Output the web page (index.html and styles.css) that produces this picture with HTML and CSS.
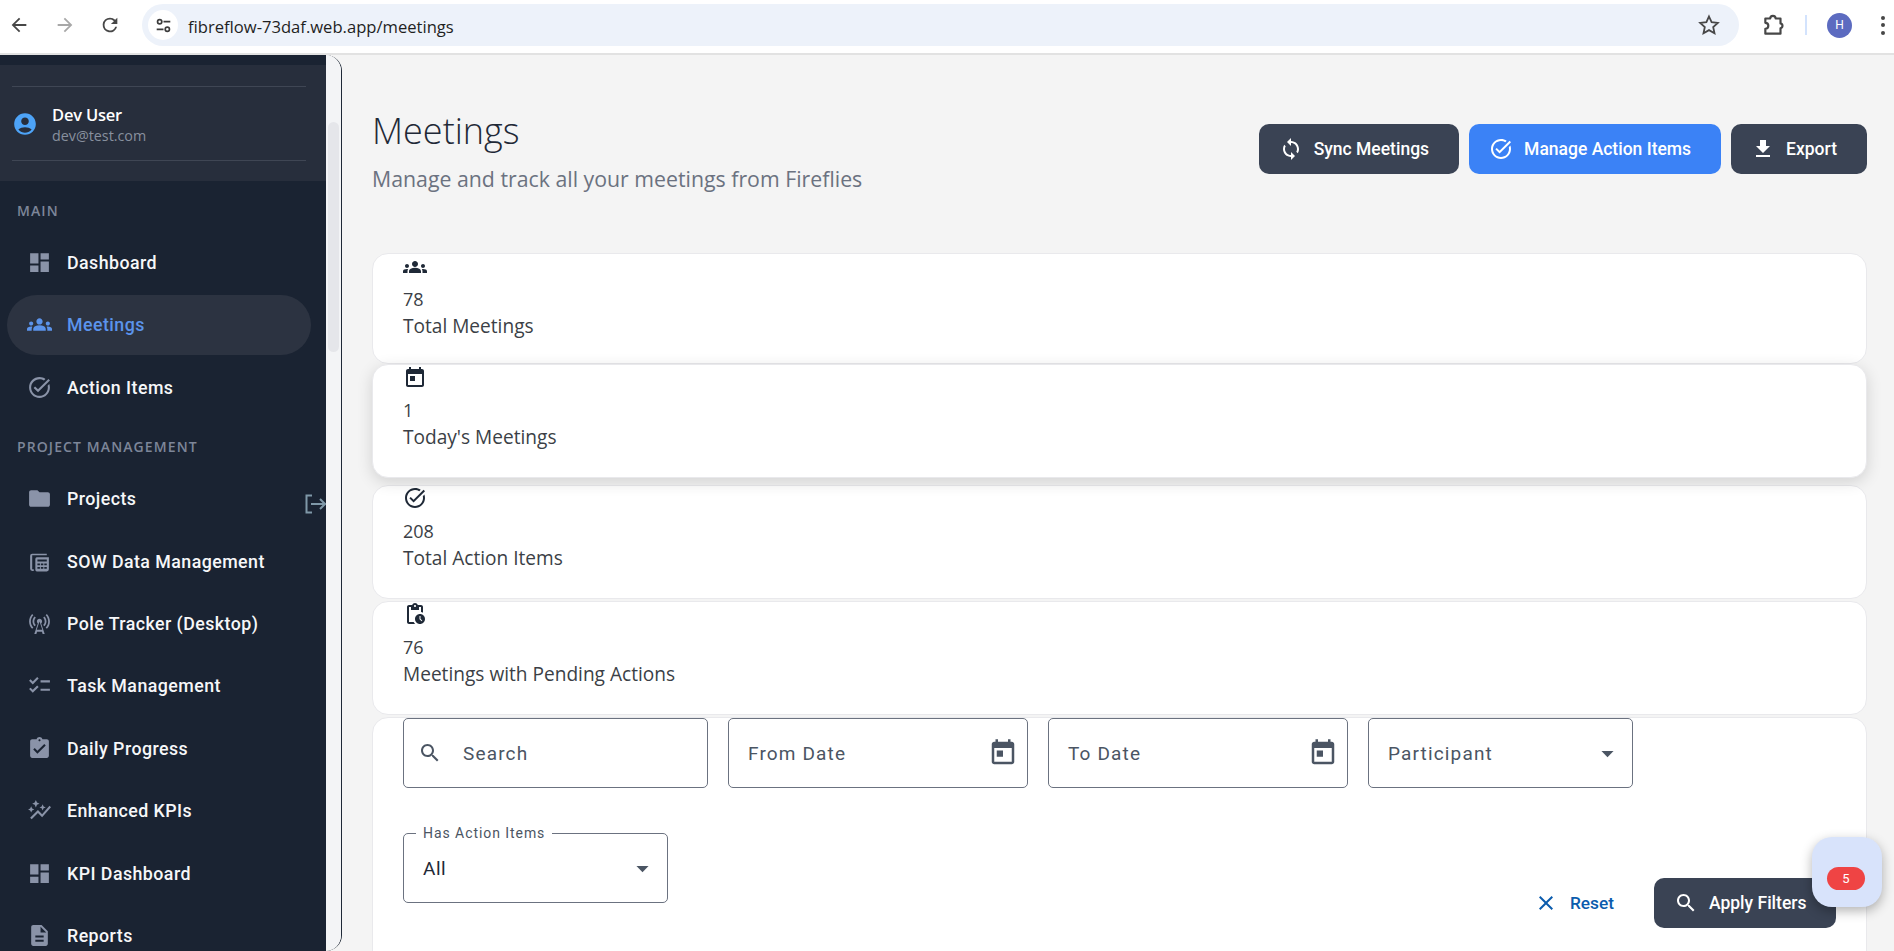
FILE: index.html
```html
<!DOCTYPE html>
<html lang="en">
<head>
<meta charset="utf-8">
<title>Meetings</title>
<link rel="stylesheet" href="styles.css">
</head>
<body>
<svg class="sprite" aria-hidden="true">
  <symbol id="i-dashboard" viewBox="0 0 24 24"><path d="M3 13h8V3H3v10zm0 8h8v-6H3v6zm10 0h8V11h-8v10zm0-18v6h8V3h-8z"/></symbol>
  <symbol id="i-groups" viewBox="0 0 24 24"><path d="M12 12.75c1.63 0 3.07.39 4.24.9 1.08.48 1.76 1.56 1.76 2.73V18H6v-1.61c0-1.18.68-2.26 1.76-2.73 1.17-.52 2.61-.91 4.24-.91zM4 13c1.1 0 2-.9 2-2s-.9-2-2-2-2 .9-2 2 .9 2 2 2zm1.13 1.1c-.37-.06-.74-.1-1.13-.1-.99 0-1.93.21-2.78.58C.48 14.9 0 15.62 0 16.43V18h4.5v-1.61c0-.83.23-1.61.63-2.29zM20 13c1.1 0 2-.9 2-2s-.9-2-2-2-2 .9-2 2 .9 2 2 2zm4 3.43c0-.81-.48-1.53-1.22-1.85-.85-.37-1.79-.58-2.78-.58-.39 0-.76.04-1.13.1.4.68.63 1.46.63 2.29V18H24v-1.57zM12 6c1.66 0 3 1.34 3 3s-1.34 3-3 3-3-1.34-3-3 1.34-3 3-3z"/></symbol>
  <symbol id="i-taskalt" viewBox="0 0 24 24"><path d="M22 5.18 10.59 16.6l-4.24-4.24 1.41-1.41 2.83 2.83 10-10L22 5.18zm-2.21 5.04c.13.57.21 1.17.21 1.78 0 4.42-3.58 8-8 8s-8-3.58-8-8 3.58-8 8-8c1.58 0 3.04.46 4.28 1.25l1.44-1.44C16.1 2.67 14.13 2 12 2 6.48 2 2 6.48 2 12s4.48 10 10 10 10-4.48 10-10c0-1.19-.22-2.33-.6-3.39l-1.61 1.61z"/></symbol>
  <symbol id="i-folder" viewBox="0 0 24 24"><path d="M10 4H4c-1.1 0-1.99.9-1.99 2L2 18c0 1.1.9 2 2 2h16c1.1 0 2-.9 2-2V8c0-1.1-.9-2-2-2h-8l-2-2z"/></symbol>
  <symbol id="i-sow" viewBox="0 0 24 24"><path d="M3 6.500a2 2 0 0 1 2-2h14v1.600H5v13.400h1.500V21H5a2 2 0 0 1-2-2z"/><path fill-rule="evenodd" d="M9.500 8H21v11.500a2 2 0 0 1-2 2H9.500A1.500 1.500 0 0 1 8 20V9.500A1.500 1.500 0 0 1 9.500 8zM10 10v2h9v-2zm0 3.800v1.700h2.400v-1.700zm3.300 0v1.700h2.400v-1.700zm3.300 0v1.700H19v-1.700zM10 17.300V19h2.400v-1.700zm3.300 0V19h2.400v-1.700zm3.300 0V19H19v-1.700z"/></symbol>
  <symbol id="i-tower" viewBox="0 0 24 24"><path d="M7.300 14.700l1.200-1.200c-1-1-1.500-2.300-1.500-3.500 0-1.300.5-2.600 1.500-3.500L7.300 5.300c-1.300 1.300-2 3-2 4.700s.7 3.400 2 4.700zM19.100 2.900l-1.200 1.200c1.600 1.600 2.400 3.800 2.400 5.900 0 2.100-.8 4.300-2.400 5.900l1.200 1.200c2-2 2.900-4.500 2.900-7.100 0-2.600-1-5.100-2.900-7.100zM6.100 4.100 4.900 2.900C3 4.900 2 7.400 2 10c0 2.600 1 5.100 2.900 7.100l1.200-1.200c-1.600-1.600-2.400-3.800-2.400-5.900 0-2.100.8-4.300 2.400-5.900zm10.600 10.600c1.300-1.300 2-3 2-4.700-.1-1.700-.7-3.400-2-4.700l-1.200 1.200c1 1 1.500 2.300 1.500 3.500 0 1.300-.5 2.600-1.500 3.500l1.200 1.200zM14.500 10c0-1.380-1.120-2.500-2.500-2.500S9.500 8.620 9.500 10c0 .76.34 1.420.87 1.880L7 22h2l.67-2h4.670l.66 2h2l-3.370-10.120c.53-.46.87-1.120.87-1.880zm-5.170 8L12 10l2.670 8H9.330z"/></symbol>
  <symbol id="i-checklist" viewBox="0 0 24 24"><path d="M22 7h-9v2h9V7zm0 8h-9v2h9v-2zM5.540 11 2 7.460l1.410-1.410 2.120 2.120 4.240-4.240 1.410 1.410L5.540 11zm0 8L2 15.460l1.410-1.410 2.120 2.120 4.240-4.240 1.410 1.410L5.540 19z"/></symbol>
  <symbol id="i-assign" viewBox="0 0 24 24"><path d="M19 3h-4.180C14.400 1.840 13.300 1 12 1c-1.300 0-2.400.84-2.820 2H5c-1.100 0-2 .9-2 2v14c0 1.100.9 2 2 2h14c1.100 0 2-.9 2-2V5c0-1.100-.9-2-2-2zm-7 0c.55 0 1 .45 1 1s-.45 1-1 1-1-.45-1-1 .45-1 1-1zm-2 14-4-4 1.410-1.410L10 14.170l6.590-6.590L18 9l-8 8z"/></symbol>
  <symbol id="i-graph" viewBox="0 0 24 24"><path d="M14.060 9.940 12 9l2.060-.94L15 6l.94 2.060L18 9l-2.060.94L15 12zM4 14l.94-2.060L7 11l-2.060-.94L4 8l-.94 2.060L1 11l2.060.94zm4.500-5 1.090-2.410L12 5.500l-2.410-1.090L8.500 2 7.410 4.410 5 5.500l2.410 1.090zm-4 11.500 6-6.010 4 4L23 8.930l-1.410-1.410-7.090 7.970-4-4L3 19z"/></symbol>
  <symbol id="i-desc" viewBox="0 0 24 24"><path d="M14 2H6c-1.100 0-1.990.9-1.990 2L4 20c0 1.100.89 2 1.990 2H18c1.100 0 2-.9 2-2V8l-6-6zm2 16H8v-2h8v2zm0-4H8v-2h8v2zm-3-5V3.500L18.500 9H13z"/></symbol>
  <symbol id="i-account" viewBox="0 0 24 24"><path d="M12 2C6.480 2 2 6.480 2 12s4.480 10 10 10 10-4.480 10-10S17.520 2 12 2zm0 4c1.930 0 3.500 1.570 3.500 3.500S13.930 13 12 13s-3.500-1.570-3.500-3.500S10.070 6 12 6zm0 14c-2.030 0-4.430-.82-6.140-2.880C7.550 15.800 9.680 15 12 15s4.450.8 6.140 2.120C16.430 19.180 14.030 20 12 20z"/></symbol>
  <symbol id="i-today" viewBox="0 0 24 24"><path d="M19 3h-1V1h-2v2H8V1H6v2H5c-1.110 0-1.990.9-1.990 2L3 19c0 1.100.89 2 2 2h14c1.100 0 2-.9 2-2V5c0-1.100-.9-2-2-2zm0 16H5V8h14v11zM7 10h5v5H7z"/></symbol>
  <symbol id="i-pending" viewBox="0 0 24 24"><path d="M17 12c-2.760 0-5 2.240-5 5s2.240 5 5 5 5-2.240 5-5-2.240-5-5-5zm1.650 7.350L16.500 17.200V14h1v2.790l1.850 1.850-.7.71zM18 3h-3.180C14.400 1.840 13.300 1 12 1s-2.400.84-2.820 2H6c-1.100 0-2 .9-2 2v15c0 1.100.9 2 2 2h6.110c-.59-.57-1.070-1.250-1.420-2H6V5h2v3h8V5h2v5.080c.71.1 1.380.31 2 .6V5c0-1.100-.9-2-2-2zm-6 2c-.55 0-1-.45-1-1s.45-1 1-1 1 .45 1 1-.45 1-1 1z"/></symbol>
  <symbol id="i-search" viewBox="0 0 24 24"><path d="M15.500 14h-.79l-.28-.27C15.410 12.590 16 11.110 16 9.500 16 5.910 13.090 3 9.500 3S3 5.910 3 9.500 5.910 16 9.500 16c1.610 0 3.090-.59 4.230-1.570l.27.28v.79l5 4.990L20.490 19l-4.990-5zm-6 0C7.010 14 5 11.990 5 9.500S7.010 5 9.500 5 14 7.010 14 9.500 11.990 14 9.500 14z"/></symbol>
  <symbol id="i-close" viewBox="0 0 24 24"><path d="M19 6.410 17.590 5 12 10.590 6.410 5 5 6.410 10.590 12 5 17.590 6.410 19 12 13.410 17.590 19 19 17.590 13.410 12z"/></symbol>
  <symbol id="i-sync" viewBox="0 0 24 24"><path d="M12 4V1L8 5l4 4V6c3.310 0 6 2.690 6 6 0 1.010-.25 1.970-.7 2.800l1.460 1.460C19.540 15.030 20 13.570 20 12c0-4.420-3.580-8-8-8zm0 14c-3.310 0-6-2.690-6-6 0-1.010.25-1.970.7-2.800L5.240 7.740C4.460 8.970 4 10.430 4 12c0 4.420 3.580 8 8 8v3l4-4-4-4v3z"/></symbol>
  <symbol id="i-download" viewBox="0 0 24 24"><path d="M19 9h-4V3H9v6H5l7 7 7-7zM5 18v2h14v-2H5z"/></symbol>
  <symbol id="i-drop" viewBox="0 0 24 24"><path d="M7 10l5 5 5-5z"/></symbol>
</svg>

<header class="browser">
  <svg class="br-icon br-back" viewBox="0 0 24 24"><path d="M20 11H7.800l5.600-5.600L12 4l-8 8 8 8 1.400-1.400L7.800 13H20z"/></svg>
  <svg class="br-icon br-fwd" viewBox="0 0 24 24"><path d="M4 11h12.200l-5.600-5.600L12 4l8 8-8 8-1.400-1.400 5.600-5.600H4z"/></svg>
  <svg class="br-icon br-reload" viewBox="0 0 24 24"><path d="M17.650 6.350A7.960 7.960 0 0 0 12 4a8 8 0 1 0 7.730 10h-2.080A6 6 0 1 1 12 6c1.660 0 3.140.69 4.220 1.780L13 11h7V4z"/></svg>
  <div class="omnibox">
    <span class="chip">
      <svg class="chip-icon" viewBox="0 0 20 20"><circle cx="5.500" cy="5.500" r="2.500"/><circle cx="14.500" cy="14.500" r="2.500"/><path class="chip-line" d="M10 5.500h8M2 14.500h8"/></svg>
    </span>
    <span class="url">fibreflow-73daf.web.app/meetings</span>
    <svg class="star" viewBox="0 0 24 24"><path d="M12 3.500l2.600 5.700 6.200.7-4.600 4.200 1.300 6.100-5.500-3.100-5.500 3.100 1.300-6.100-4.600-4.200 6.200-.7z"/></svg>
  </div>
  <svg class="puzzle" viewBox="0 0 24 24"><path d="M4 6h4.500a2.500 2.500 0 0 1 5 0H18v4.500a2.300 2.300 0 0 1 0 4.500V20H4v-4.500a2.700 2.700 0 0 0 0-5.500z"/></svg>
  <span class="br-sep"></span>
  <span class="avatar">H</span>
  <span class="kebab"><i></i><i></i><i></i></span>
</header>

<div class="app">
  <aside class="sidebar">
    <div class="side-content">
      <div class="side-top"></div>
      <div class="user-block">
        <div class="user-row">
          <svg class="user-icon"><use href="#i-account"/></svg>
          <div class="user-text">
            <div class="user-name">Dev User</div>
            <div class="user-mail">dev@test.com</div>
          </div>
        </div>
      </div>
      <div class="section-label first">MAIN</div>
      <nav class="nav">
        <a class="nav-item"><svg class="nav-icon"><use href="#i-dashboard"/></svg>Dashboard</a>
        <a class="nav-item active"><svg class="nav-icon"><use href="#i-groups"/></svg>Meetings</a>
        <a class="nav-item"><svg class="nav-icon"><use href="#i-taskalt"/></svg>Action Items</a>
      </nav>
      <div class="section-label second">PROJECT MANAGEMENT</div>
      <nav class="nav">
        <a class="nav-item"><svg class="nav-icon"><use href="#i-folder"/></svg>Projects</a>
        <a class="nav-item"><svg class="nav-icon"><use href="#i-sow"/></svg>SOW Data Management</a>
        <a class="nav-item"><svg class="nav-icon"><use href="#i-tower"/></svg>Pole Tracker (Desktop)</a>
        <a class="nav-item"><svg class="nav-icon"><use href="#i-checklist"/></svg>Task Management</a>
        <a class="nav-item"><svg class="nav-icon"><use href="#i-assign"/></svg>Daily Progress</a>
        <a class="nav-item"><svg class="nav-icon"><use href="#i-graph"/></svg>Enhanced KPIs</a>
        <a class="nav-item"><svg class="nav-icon"><use href="#i-dashboard"/></svg>KPI Dashboard</a>
        <a class="nav-item"><svg class="nav-icon"><use href="#i-desc"/></svg>Reports</a>
      </nav>
      <svg class="logout" viewBox="0 0 24 24"><path d="M10 3.500H4.500v17H10M9 12h14M18 7l5 5-5 5"/></svg>
    </div>
    <div class="side-track"><div class="side-thumb"></div></div>
  </aside>

  <main class="main">
    <section class="page-head">
      <div>
        <h1 class="title">Meetings</h1>
        <p class="subtitle">Manage and track all your meetings from Fireflies</p>
      </div>
      <div class="head-actions">
        <button class="btn btn-dark"><svg class="btn-icon"><use href="#i-sync"/></svg>Sync Meetings</button>
        <button class="btn btn-blue"><svg class="btn-icon"><use href="#i-taskalt"/></svg>Manage Action Items</button>
        <button class="btn btn-dark"><svg class="btn-icon"><use href="#i-download"/></svg>Export</button>
      </div>
    </section>

    <section class="stats">
      <article class="card stat stat-a">
        <svg class="stat-icon"><use href="#i-groups"/></svg>
        <div class="stat-num">78</div>
        <div class="stat-label">Total Meetings</div>
      </article>
      <article class="card stat stat-b raised">
        <svg class="stat-icon"><use href="#i-today"/></svg>
        <div class="stat-num">1</div>
        <div class="stat-label">Today's Meetings</div>
      </article>
      <article class="card stat stat-c">
        <svg class="stat-icon"><use href="#i-taskalt"/></svg>
        <div class="stat-num">208</div>
        <div class="stat-label">Total Action Items</div>
      </article>
      <article class="card stat stat-d">
        <svg class="stat-icon"><use href="#i-pending"/></svg>
        <div class="stat-num">76</div>
        <div class="stat-label">Meetings with Pending Actions</div>
      </article>
    </section>

    <section class="card filters">
      <div class="filter-row">
        <div class="field f-search"><svg class="field-search"><use href="#i-search"/></svg><span>Search</span></div>
        <div class="field f-date"><span>From Date</span><svg class="field-cal"><use href="#i-today"/></svg></div>
        <div class="field f-date"><span>To Date</span><svg class="field-cal"><use href="#i-today"/></svg></div>
        <div class="field f-select"><span>Participant</span><svg class="field-drop"><use href="#i-drop"/></svg></div>
      </div>
      <div class="filter-row second-row">
        <div class="field f-select filled">
          <label class="float-label">Has Action Items</label>
          <span>All</span><svg class="field-drop"><use href="#i-drop"/></svg>
        </div>
        <div class="filter-actions">
          <button class="btn-text"><svg class="btn-icon"><use href="#i-close"/></svg>Reset</button>
          <button class="btn btn-dark apply"><svg class="btn-icon"><use href="#i-search"/></svg>Apply Filters</button>
        </div>
      </div>
    </section>
  </main>
</div>

<div class="float-widget"><span class="badge">5</span></div>
</body>
</html>
```
FILE: styles.css
```css
* { box-sizing: border-box; }
html, body { margin: 0; height: 100%; overflow: hidden; }
body {
  display: flex;
  flex-direction: column;
  height: 951px;
  background: #f4f4f4;
  font-family: "Open Sans", "Liberation Sans", sans-serif;
  color: #374151;
}
.sprite { display: none; }
svg { fill: currentColor; flex: none; }

/* Browser chrome */
.browser {
  height: 55px;
  flex: none;
  display: flex;
  align-items: center;
  background: #fff;
  border-bottom: 2px solid #e2e2e2;
  padding-bottom: 3px;
  position: relative;
}
.br-icon { width: 22px; height: 22px; color: #474747; }
.br-back { margin-left: 8px; }
.br-fwd { margin-left: 23.500px; color: #a8a8a8; }
.br-reload { margin-left: 23px; }
.omnibox {
  margin-left: 21.500px;
  width: 1597px;
  height: 42px;
  border-radius: 21px;
  background: #edf2fa;
  display: flex;
  align-items: center;
  padding: 0 18px 0 6px;
}
.chip {
  width: 30px;
  height: 30px;
  border-radius: 50%;
  background: #fff;
  display: flex;
  align-items: center;
  justify-content: center;
}
.chip-icon { width: 17px; height: 17px; fill: none; stroke: #3c3c3c; stroke-width: 2; }
.chip-line { stroke-linecap: butt; }
.url {
  margin-left: 10px;
  font-size: 16.600px;
  color: #1f1f1f;
  flex: 1;
  position: relative;
  top: 1px;
}
.star { width: 24px; height: 24px; fill: none; stroke: #474747; stroke-width: 1.800; }
.puzzle {
  margin-left: 22px;
  width: 26px;
  height: 26px;
  fill: none;
  stroke: #474747;
  stroke-width: 2;
  stroke-linejoin: round;
}
.br-sep { width: 2px; height: 20px; background: #d3e3fd; margin-left: 18px; }
.avatar {
  margin-left: 20px;
  width: 25px;
  height: 25px;
  border-radius: 50%;
  background: #5c6bc0;
  color: #fff;
  font: 400 12px "Roboto", sans-serif;
  display: flex;
  align-items: center;
  justify-content: center;
}
.kebab {
  margin-left: 29px;
  display: flex;
  flex-direction: column;
  gap: 3.500px;
}
.kebab i { width: 4px; height: 4px; border-radius: 50%; background: #474747; display: block; }

/* Layout */
.app { flex: 1; display: flex; min-height: 0; }

/* Sidebar */
.sidebar {
  width: 342px;
  flex: none;
  display: flex;
  border-right: 1px solid #1f2937;
  border-radius: 0 16px 16px 0;
  overflow: hidden;
  font-family: "Roboto", sans-serif;
}
.side-content {
  width: 326px;
  flex: none;
  background: #1a2332;
  position: relative;
  overflow: hidden;
}
.side-top { height: 10px; }
.user-block {
  height: 116px;
  background: #272e3c;
  padding: 21px 20px 0 12px;
}
.user-row {
  width: 294px;
  height: 75px;
  border-top: 1px solid #3f4654;
  border-bottom: 1px solid #3f4654;
  display: flex;
  align-items: center;
  gap: 14px;
}
.user-icon { width: 26px; height: 26px; color: #4da3f7; }
.user-text { margin-top: 4px; }
.user-name {
  font: 600 16.500px/20px "Open Sans", sans-serif;
  color: #fff;
  letter-spacing: -.2px;
}
.user-mail {
  font: 400 14.300px/20px "Open Sans", sans-serif;
  color: #88909e;
  margin-top: 1px;
}
.section-label {
  padding-left: 17px;
  font: 600 14px/20px "Open Sans", sans-serif;
  letter-spacing: 1.100px;
  color: #7d8699;
}
.section-label.first { margin-top: 20px; margin-bottom: 11.500px; }
.section-label.second { margin-top: 20px; margin-bottom: 11.500px; }
.nav { display: flex; flex-direction: column; gap: 2.400px; }
.nav-item {
  height: 60px;
  margin: 0 15px 0 7px;
  padding-left: 20px;
  display: flex;
  align-items: center;
  gap: 15px;
  font-size: 17.800px;
  font-weight: 500;
  letter-spacing: .45px;
  color: #f6f7f9;
  border-radius: 30px;
}
.nav-item.active { background: #2c3341; color: #5b94ec; }
.nav-icon { width: 25px; height: 25px; color: #8a93a8; }
.active .nav-icon { color: #5b94ec; }
.logout {
  position: absolute;
  left: 302px;
  top: 437px;
  width: 24px;
  height: 24px;
  fill: none;
  stroke: #7f98a8;
  stroke-width: 2;
}
.side-track {
  flex: 1;
  background: #f3f4f6;
  padding: 67px 2px 0;
  border-radius: 0 0 0 12px;
}
.side-thumb { height: 230px; border-radius: 6px; background: #e5e6ea; }

/* Main */
.main { flex: 1; min-width: 0; padding: 52px 27px 0 30px; overflow: hidden; }
.page-head { display: flex; justify-content: space-between; align-items: flex-start; }
.title {
  margin: 0 0 9px;
  font-size: 36px;
  line-height: 48px;
  font-weight: 300;
  color: #1f2937;
}
.subtitle { margin: 0; font-size: 21.300px; line-height: 29px; color: #6b7280; }
.head-actions { display: flex; gap: 10px; margin-top: 17px; }
.btn {
  height: 50px;
  border: 0;
  border-radius: 10px;
  padding: 0 30px 0 20px;
  display: inline-flex;
  align-items: center;
  gap: 11px;
  font: 500 17.500px "Roboto", sans-serif;
  color: #fff;
}
.btn-dark { background: #3a4354; }
.btn-blue { background: #3b82f6; }
.btn-icon { width: 24px; height: 24px; }

/* Cards */
.card {
  background: #fff;
  border: 1px solid #e9e9ec;
  border-radius: 16px;
}
.stats { margin-top: 60px; display: flex; flex-direction: column; }
.stat { padding: 0 0 0 30px; }
.stat-a { height: 111px; }
.stat-b { height: 114px; }
.stat-c { height: 114px; margin-top: 7px; }
.stat-d { height: 114px; margin-top: 2px; }
.raised { box-shadow: 0 4px 16px rgba(0, 0, 0, .14); position: relative; }
.stat-icon { width: 24px; height: 24px; display: block; color: #1f2937; }
.stat-a .stat-icon, .stat-b .stat-icon { margin: 1px 0 -1px; }
.stat-num { font-size: 18px; line-height: 26px; margin-top: 8px; color: #3b3f46; }
.stat-label { font-size: 19.100px; line-height: 27px; margin-top: 1px; color: #3b3f46; }

/* Filters */
.filters {
  margin-top: 2px;
  height: 400px;
  padding: 0 30px;
}
.filter-row { display: flex; gap: 20px; }
.second-row { margin-top: 45px; align-items: flex-start; }
.field {
  height: 70px;
  border: 1px solid #6b7280;
  border-radius: 5px;
  display: flex;
  align-items: center;
  font: 400 19px "Roboto", sans-serif;
  letter-spacing: 1.150px;
  color: #4b5563;
  position: relative;
}
.f-search { width: 305px; padding-left: 14px; }
.f-date { width: 300px; padding: 0 9px 0 19px; justify-content: space-between; }
.f-select { width: 265px; padding: 0 10px 0 19px; justify-content: space-between; }
.filled { color: #1f2937; letter-spacing: .5px; }
.field-search { width: 24px; height: 24px; margin-right: 21px; color: #4b5563; }
.field-cal { width: 30px; height: 30px; color: #4b5563; }
.field-drop { width: 29px; height: 29px; color: #4b5563; }
.float-label {
  position: absolute;
  left: 12px;
  top: -10px;
  padding: 0 7px;
  background: #fff;
  font-size: 14px;
  line-height: 18px;
  letter-spacing: .94px;
  color: #4b5563;
}
.filter-actions {
  margin-left: auto;
  display: flex;
  align-items: center;
  margin-top: 45px;
  gap: 40px;
}
.btn-text {
  background: none;
  border: 0;
  padding: 0;
  display: inline-flex;
  align-items: center;
  gap: 12px;
  font: 500 17.300px "Roboto", sans-serif;
  color: #0b5cad;
}
.apply { width: 182px; padding: 0 0 0 20px; }

/* Floating widget */
.float-widget {
  position: fixed;
  left: 1812px;
  top: 837px;
  width: 70px;
  height: 70px;
  border-radius: 20px;
  background: #d8e3fb;
  box-shadow: 0 4px 12px rgba(0, 0, 0, .3);
}
.badge {
  position: absolute;
  left: 15px;
  top: 30px;
  width: 38px;
  height: 23px;
  border-radius: 12px;
  background: #ef4444;
  color: #fff;
  font: 400 13px/23px "Roboto", sans-serif;
  text-align: center;
}
```
